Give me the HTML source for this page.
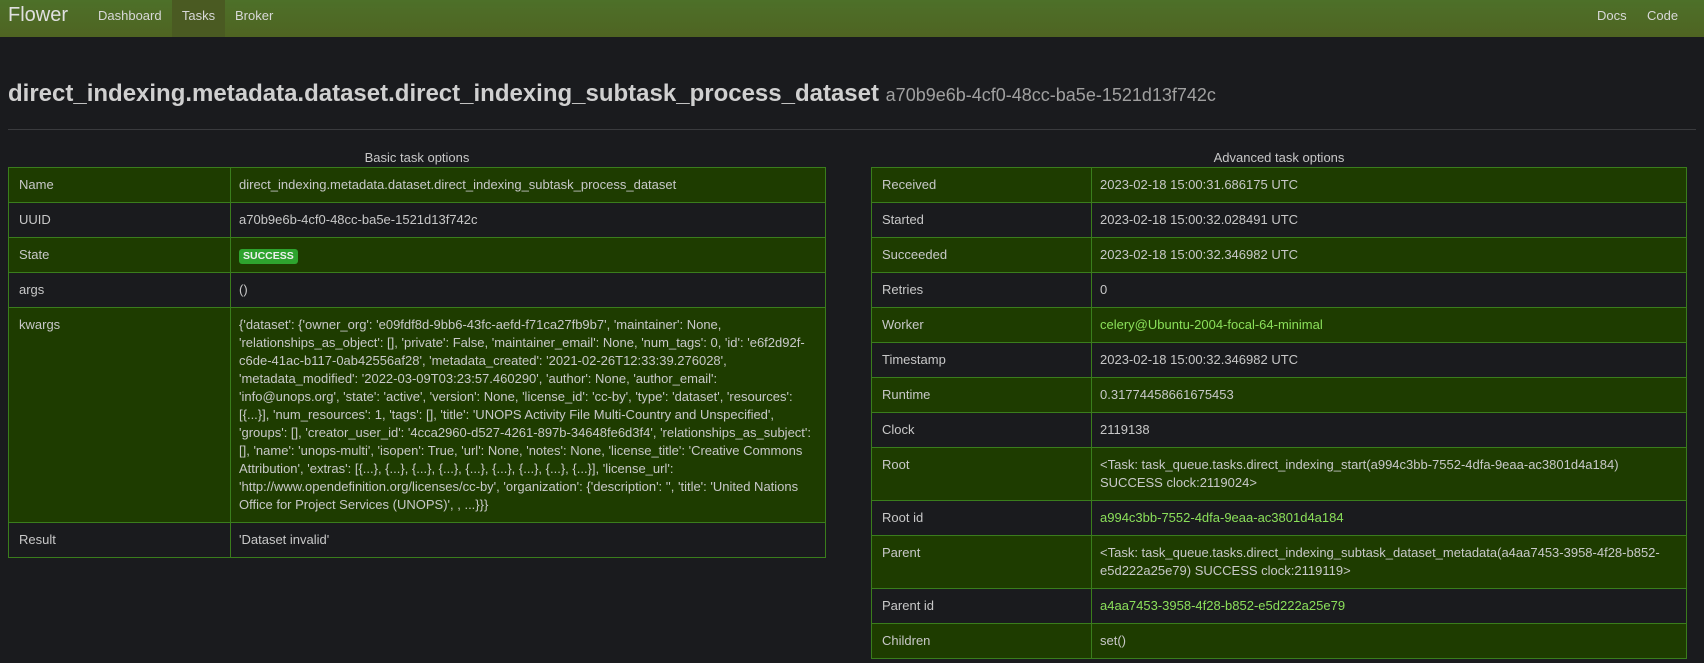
<!DOCTYPE html>
<html><head><meta charset="utf-8"><style>
*{box-sizing:border-box}
body{margin:0;background:#1a1b1e;color:#c8c8c8;font-family:"Liberation Sans",sans-serif;font-size:13px;line-height:18px;width:1704px;height:663px;overflow:hidden;position:relative}
.nav{position:absolute;left:0;top:0;width:1704px;height:37px;background:linear-gradient(#4d7029,#4f6422);}
.nav span{position:absolute;top:0;line-height:31px;color:#d8d8d8}
.brand{font-size:20px;left:8px;color:#e0e0e0!important;line-height:30px!important}
.act{background:#4a5a22;height:37px;padding:0 0}
h1{position:absolute;left:8px;top:78px;margin:0;font-size:24px;font-weight:bold;color:#d0d0d0;white-space:nowrap;line-height:32px}
h1 small{font-size:18px;font-weight:normal;color:#a0a0a0}
hr{position:absolute;left:8px;top:129px;width:1688px;margin:0;border:0;border-top:1px solid #3a3b3e}
.cap{position:absolute;top:149px;text-align:center}
table{position:absolute;top:167px;border-collapse:collapse;border:1px solid #3a7d1c}
td{border:1px solid #3a7d1c;padding:8px 8px 8px 10px;vertical-align:top;height:35px}
td+td{padding-left:8px}
tr.g td{background:#1e3c00}
.badge{display:inline-block;background:#2ea32e;color:#f0f0f0;font-size:10.5px;font-weight:bold;border-radius:3px;padding:0 4px;line-height:15px}
a{color:#8be05a;text-decoration:none}
</style></head><body>
<div class="nav">
<span class="brand">Flower</span>
<span style="left:98px">Dashboard</span>
<span class="act" style="left:172px;width:53px;text-align:center;line-height:31px">Tasks</span>
<span style="left:235px">Broker</span>
<span style="left:1597px">Docs</span>
<span style="left:1647px">Code</span>
</div>
<h1>direct_indexing.metadata.dataset.direct_indexing_subtask_process_dataset <small>a70b9e6b-4cf0-48cc-ba5e-1521d13f742c</small></h1>
<hr>
<div class="cap" style="left:8px;width:818px">Basic task options</div>
<div class="cap" style="left:871px;width:816px">Advanced task options</div>
<table style="left:8px;width:818px">
<tr class="g"><td style="width:222px">Name</td><td>direct_indexing.metadata.dataset.direct_indexing_subtask_process_dataset</td></tr>
<tr><td>UUID</td><td>a70b9e6b-4cf0-48cc-ba5e-1521d13f742c</td></tr>
<tr class="g"><td>State</td><td><span class="badge">SUCCESS</span></td></tr>
<tr><td>args</td><td>()</td></tr>
<tr class="g"><td>kwargs</td><td>{'dataset': {'owner_org': 'e09fdf8d-9bb6-43fc-aefd-f71ca27fb9b7', 'maintainer': None,<br>'relationships_as_object': [], 'private': False, 'maintainer_email': None, 'num_tags': 0, 'id': 'e6f2d92f-<br>c6de-41ac-b117-0ab42556af28', 'metadata_created': '2021-02-26T12:33:39.276028',<br>'metadata_modified': '2022-03-09T03:23:57.460290', 'author': None, 'author_email':<br>'info@unops.org', 'state': 'active', 'version': None, 'license_id': 'cc-by', 'type': 'dataset', 'resources':<br>[{...}], 'num_resources': 1, 'tags': [], 'title': 'UNOPS Activity File Multi-Country and Unspecified',<br>'groups': [], 'creator_user_id': '4cca2960-d527-4261-897b-34648fe6d3f4', 'relationships_as_subject':<br>[], 'name': 'unops-multi', 'isopen': True, 'url': None, 'notes': None, 'license_title': 'Creative Commons<br>Attribution', 'extras': [{...}, {...}, {...}, {...}, {...}, {...}, {...}, {...}, {...}], 'license_url':<br>'http://www.opendefinition.org/licenses/cc-by', 'organization': {'description': '', 'title': 'United Nations<br>Office for Project Services (UNOPS)', , ...}}}</td></tr>
<tr><td>Result</td><td>'Dataset invalid'</td></tr>
</table>
<table style="left:871px;width:816px">
<tr class="g"><td style="width:220px">Received</td><td>2023-02-18 15:00:31.686175 UTC</td></tr>
<tr><td>Started</td><td>2023-02-18 15:00:32.028491 UTC</td></tr>
<tr class="g"><td>Succeeded</td><td>2023-02-18 15:00:32.346982 UTC</td></tr>
<tr><td>Retries</td><td>0</td></tr>
<tr class="g"><td>Worker</td><td><a>celery@Ubuntu-2004-focal-64-minimal</a></td></tr>
<tr><td>Timestamp</td><td>2023-02-18 15:00:32.346982 UTC</td></tr>
<tr class="g"><td>Runtime</td><td>0.31774458661675453</td></tr>
<tr><td>Clock</td><td>2119138</td></tr>
<tr class="g"><td>Root</td><td>&lt;Task: task_queue.tasks.direct_indexing_start(a994c3bb-7552-4dfa-9eaa-ac3801d4a184)<br>SUCCESS clock:2119024&gt;</td></tr>
<tr><td>Root id</td><td><a>a994c3bb-7552-4dfa-9eaa-ac3801d4a184</a></td></tr>
<tr class="g"><td>Parent</td><td>&lt;Task: task_queue.tasks.direct_indexing_subtask_dataset_metadata(a4aa7453-3958-4f28-b852-<br>e5d222a25e79) SUCCESS clock:2119119&gt;</td></tr>
<tr><td>Parent id</td><td><a>a4aa7453-3958-4f28-b852-e5d222a25e79</a></td></tr>
<tr class="g"><td>Children</td><td>set()</td></tr>
</table>
</body></html>
